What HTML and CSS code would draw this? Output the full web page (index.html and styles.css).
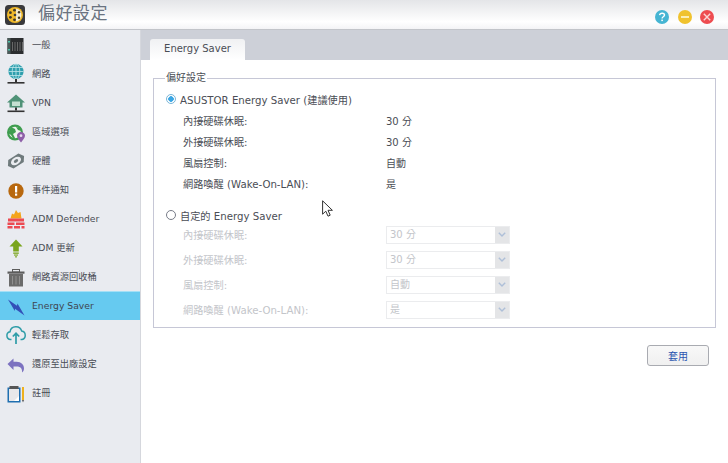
FILE: index.html
```html
<!DOCTYPE html>
<html lang="zh-Hant">
<head>
<meta charset="utf-8">
<title>偏好設定</title>
<link rel="stylesheet" href="styles.css">
</head>
<body>
<div class="window">
  <header class="titlebar">
    <svg class="logo" viewBox="0 0 20 20" width="20" height="20">
      <rect width="20" height="20" rx="3.5" fill="#3a3a3c"/>
      <circle cx="10" cy="10" r="8" fill="#f0b92a"/>
      <path d="M11 3.600a6.500 6.500 0 0 1 0 12.800z" fill="#f4ecd0"/>
      <circle cx="10" cy="10" r="1.300" fill="#3a3a3c"/>
      <g fill="#40382a"><circle cx="9.500" cy="5.200" r="1.400"/><circle cx="9.500" cy="14.800" r="1.400"/><circle cx="5.400" cy="7.700" r="1.400"/><circle cx="14" cy="7.300" r="1.200"/><circle cx="5.400" cy="12.300" r="1.400"/><circle cx="14" cy="12.700" r="1.200"/></g>
    </svg>
    <h1 class="title">偏好設定</h1>
    <div class="winbtns">
      <svg class="winbtn" viewBox="0 0 14 14" width="14" height="14"><circle cx="7" cy="7" r="7" fill="#46b5d3"/><path d="M4.600 5.200C4.800 3.800 5.900 3.200 7.100 3.200c1.400 0 2.400.8 2.400 1.900 0 1.700-2.400 1.600-2.400 3.300" fill="none" stroke="#fff" stroke-width="1.400"/><rect x="6.300" y="9.600" width="1.600" height="1.500" fill="#fff"/></svg>
      <svg class="winbtn" viewBox="0 0 14 14" width="14" height="14"><circle cx="7" cy="7" r="7" fill="#f0c22e"/><rect x="3" y="6" width="8" height="2" fill="#fbeeb5"/></svg>
      <svg class="winbtn" viewBox="0 0 14 14" width="14" height="14"><circle cx="7" cy="7" r="7" fill="#ee4c50"/><path d="M3.800 3.800l6.400 6.400M10.200 3.800l-6.400 6.400" stroke="#fbd5d5" stroke-width="1.400"/></svg>
    </div>
  </header>
  <div class="body">
    <nav class="sidebar">
      <a class="item"><svg class="icon" viewBox="0 0 24 24"><rect x="3.500" y="5" width="16" height="16" fill="#2b2d2f"/><rect x="3.500" y="5" width="3" height="16" fill="#4a5a58"/><g stroke="#777" stroke-width=".8"><path d="M8.500 9v9M11 9v9M13.500 9v9M16 9v9M18.500 9v9"/></g><rect x="4" y="8" width="2" height="1.500" fill="#4cc0a8"/><rect x="4" y="16" width="2" height="1.500" fill="#4cc0a8"/></svg><span>一般</span></a>
      <a class="item"><svg class="icon" viewBox="0 0 24 24"><circle cx="12" cy="9.500" r="7.600" fill="#2f9fae"/><path d="M4.400 9.500h15.200M5.500 5.500h13M5.500 13.500h13M12 2v15" stroke="#bfe6ea" stroke-width=".8" fill="none"/><ellipse cx="12" cy="9.500" rx="3.800" ry="7.600" stroke="#bfe6ea" stroke-width=".8" fill="none"/><rect x="11" y="17" width="2" height="3" fill="#333"/><rect x="3.500" y="20" width="17" height="1.600" fill="#333"/></svg><span>網路</span></a>
      <a class="item"><svg class="icon" viewBox="0 0 24 24"><path d="M12 3.500L3 11.500h2.500v5h13v-5H21z" fill="#4f9277"/><rect x="8" y="10.500" width="8" height="4.500" fill="#c4e0d2"/><rect x="11" y="16.500" width="2" height="3" fill="#333"/><rect x="3.500" y="19.500" width="17" height="1.600" fill="#333"/></svg><span>VPN</span></a>
      <a class="item"><svg class="icon" viewBox="0 0 24 24"><circle cx="11" cy="12.500" r="8" fill="#3f9d4f"/><circle cx="11" cy="12.500" r="5.800" fill="#f0f4ee"/><path d="M7 7l4 2 1 3-3 2 2 4-1 2-3-5-3-2zM12 7l4 1 1 3-3-1z" fill="#3f9d4f"/><path d="M17 12c-2.500 0-4 1.800-4 3.800 0 2.200 2.700 4.800 4 6.700 1.300-1.900 4-4.500 4-6.700 0-2-1.500-3.800-4-3.800z" fill="#8e5fa8"/><circle cx="17" cy="15.700" r="1.400" fill="#e8d8f0"/></svg><span>區域選項</span></a>
      <a class="item"><svg class="icon" viewBox="0 0 24 24"><g transform="rotate(-32 12 12)"><path d="M6 7h12l3.500 5-3.500 5H6l-3.500-5z" fill="#6f7a7c"/><ellipse cx="12" cy="12" rx="5.500" ry="3.600" fill="#e9ebef"/><ellipse cx="12" cy="12" rx="2.400" ry="1.500" fill="#6f7a7c"/></g></svg><span>硬體</span></a>
      <a class="item"><svg class="icon" viewBox="0 0 24 24"><circle cx="12" cy="13" r="7.700" fill="#b8680f"/><rect x="11" y="8" width="2.200" height="6.500" fill="#fff"/><rect x="11" y="15.500" width="2.200" height="2.200" fill="#fff"/></svg><span>事件通知</span></a>
      <a class="item"><svg class="icon" viewBox="0 0 24 24"><path d="M12 3l2 3 2.500-1 1 6.500H6.500l1.500-5 2 1z" fill="#f4a41c"/><path d="M4 11.500h16v3H4zM3.500 15.500h7v2.500h-7zM12 15.500h8.500V18H12zM3.500 19h5v2.500h-5zM10 19h6v2.500h-6zM17.500 19h3v2.500h-3z" fill="#ec4a52"/></svg><span>ADM Defender</span></a>
      <a class="item"><svg class="icon" viewBox="0 0 24 24"><path d="M12 3.500l6.500 7h-3.700v5H9.200v-5H5.500z" fill="#7aa51c"/><rect x="9.200" y="16.500" width="5.600" height="1.300" fill="#7aa51c"/><rect x="10" y="18.500" width="4" height="1.100" fill="#7aa51c"/><rect x="11" y="20.300" width="2" height="1.100" fill="#7aa51c"/></svg><span>ADM 更新</span></a>
      <a class="item"><svg class="icon" viewBox="0 0 24 24"><rect x="3.500" y="6.500" width="17" height="2.200" fill="#5c5c5c"/><rect x="8.500" y="4.500" width="7" height="2.500" fill="none" stroke="#5c5c5c" stroke-width="1"/><path d="M5 9h14v12.500H5z" fill="#6b6b6b"/><path d="M8.500 11v8.500M12 11v8.500M15.500 11v8.500" stroke="#909090" stroke-width="1"/></svg><span>網路資源回收桶</span></a>
      <a class="item active"><svg class="icon" viewBox="0 0 24 24"><path d="M4 5.500l9 6.200.5-2.200 7 12-9.500-6.700-.2 2.200z" fill="#3350b8"/></svg><span>Energy Saver</span></a>
      <a class="item"><svg class="icon" viewBox="0 0 24 24"><path d="M7.500 16.500H6.500a3.900 3.900 0 0 1-.5-7.700 6 6 0 0 1 11.700-.7 4.300 4.300 0 0 1 .3 8.400h-1.500" fill="none" stroke="#2f9da8" stroke-width="1.500"/><path d="M12 21v-10M8.800 13.500l3.200-3.200 3.200 3.200" fill="none" stroke="#2f9da8" stroke-width="1.700"/></svg><span>輕鬆存取</span></a>
      <a class="item"><svg class="icon" viewBox="0 0 24 24"><path d="M3.500 12L9.500 6.500v3.300h3c4.800 0 7.500 3 7.500 6.700 0 2-.8 3.200-2 4 .5-4-1.800-6-5-6H9.500v3.500z" fill="#7c72c0"/></svg><span>還原至出廠設定</span></a>
      <a class="item"><svg class="icon" viewBox="0 0 24 24"><rect x="3.500" y="6.500" width="13" height="15" fill="#1f6fb0"/><rect x="5" y="8" width="10" height="12" fill="#e8e8ea"/><path d="M15 20v-5l-5 5z" fill="#fff"/><rect x="5.500" y="5" width="9" height="3" fill="#555"/><rect x="18" y="6" width="2" height="13" fill="#eeb11e"/><path d="M18 19h2l-1 2.500z" fill="#555"/></svg><span>註冊</span></a>
    </nav>
    <main class="main">
      <div class="tabs"><div class="tab">Energy Saver</div></div>
      <div class="content">
        <fieldset class="group">
          <legend>偏好設定</legend>
          <label class="radio-row"><span class="radio on"></span>ASUSTOR Energy Saver (建議使用)</label>
          <div class="rows">
            <div class="row"><span class="key">內接硬碟休眠:</span><span>30 分</span></div>
            <div class="row"><span class="key">外接硬碟休眠:</span><span>30 分</span></div>
            <div class="row"><span class="key">風扇控制:</span><span>自動</span></div>
            <div class="row"><span class="key">網路喚醒 (Wake-On-LAN):</span><span>是</span></div>
          </div>
          <label class="radio-row custom"><span class="radio"></span>自定的 Energy Saver</label>
          <div class="rows disabled">
            <div class="row"><span class="key">內接硬碟休眠:</span><span class="select"><span class="val">30 分</span><span class="arrow"><svg viewBox="0 0 8 5" width="8" height="5"><path d="M.8.8L4 4l3.200-3.200" fill="none" stroke="#aebfd8" stroke-width="1.400"/></svg></span></span></div>
            <div class="row"><span class="key">外接硬碟休眠:</span><span class="select"><span class="val">30 分</span><span class="arrow"><svg viewBox="0 0 8 5" width="8" height="5"><path d="M.8.8L4 4l3.200-3.200" fill="none" stroke="#aebfd8" stroke-width="1.400"/></svg></span></span></div>
            <div class="row"><span class="key">風扇控制:</span><span class="select"><span class="val">自動</span><span class="arrow"><svg viewBox="0 0 8 5" width="8" height="5"><path d="M.8.8L4 4l3.200-3.200" fill="none" stroke="#aebfd8" stroke-width="1.400"/></svg></span></span></div>
            <div class="row"><span class="key">網路喚醒 (Wake-On-LAN):</span><span class="select"><span class="val">是</span><span class="arrow"><svg viewBox="0 0 8 5" width="8" height="5"><path d="M.8.8L4 4l3.200-3.200" fill="none" stroke="#aebfd8" stroke-width="1.400"/></svg></span></span></div>
          </div>
        </fieldset>
        <div class="actions"><button class="apply" type="button">套用</button></div>
      </div>
    </main>
  </div>
  <svg class="cursor" viewBox="0 0 12 18" width="12" height="18"><path d="M.6.8v13.400l3.200-3 2.200 5 2.200-1-2.200-4.900h4.400z" fill="#fff" stroke="#333" stroke-width="1"/></svg>
</div>
</body>
</html>
```
FILE: styles.css
```css
* { box-sizing: border-box; }
html, body { margin: 0; padding: 0; }
body {
  width: 728px;
  height: 463px;
  overflow: hidden;
  font-family: "DejaVu Sans", "Noto Sans CJK TC", sans-serif;
  font-size: 10px;
  color: #4a4d55;
  background: #fff;
}
.window { position: relative; width: 728px; height: 463px; display: flex; flex-direction: column; }
.titlebar {
  height: 30px;
  flex: none;
  display: flex;
  align-items: center;
  padding: 0 5px;
  background: linear-gradient(#e4e5e8, #ffffff 75%, #f4f4f6);
  border-bottom: 1px solid #c2c4c9;
}
.logo { flex: none; margin-top: 1px; }
.title {
  margin: -5px 0 0 13px;
  font-size: 17px;
  line-height: 20px;
  font-weight: 400;
  letter-spacing: .5px;
  color: #6a7380;
  font-family: "Noto Sans CJK TC", sans-serif;
}
.winbtns { margin: 5px 9px 0 auto; display: flex; gap: 8.500px; }
.winbtn { display: block; }
.body { flex: 1; display: flex; min-height: 0; }
.sidebar {
  width: 141px;
  flex: none;
  background: #e9ebf0;
  border-right: 1px solid #d5d7dd;
  display: flex;
  flex-direction: column;
  font-size: 9.250px;
}
.item {
  height: 29px;
  flex: none;
  display: flex;
  align-items: center;
  gap: 4.500px;
  padding-left: 3.500px;
  color: #4a4d55;
}
.item span { margin-top: -1px; }
.item.active { background: #66caf0; box-shadow: inset 0 1px 0 #a5e0f6; color: #3f4650; }
.icon { width: 24px; height: 24px; flex: none; }
.main { flex: 1; min-width: 0; display: flex; flex-direction: column; }
.tabs {
  height: 30px;
  flex: none;
  background: #cdd0d8;
  padding: 9px 0 0 9px;
  display: flex;
}
.tab {
  width: 95px;
  height: 21px;
  background: linear-gradient(#f0f1f3, #fff);
  border-radius: 3px 3px 0 0;
  text-align: center;
  line-height: 20px;
  color: #4a4d55;
}
.content { flex: 1; padding: 12px 12px 0 12px; }
.group {
  margin: 0;
  padding: 7px 12px 0 12px;
  height: 256px;
  border: 1px solid #c6c7d6;
  min-width: 0;
}
.group legend { padding: 0 1px; margin-left: -1px; font-size: 10px; color: #4a4d55; line-height: 12px; }
.radio-row { display: flex; align-items: center; gap: 4px; height: 16px; font-size: 10.200px; }
.radio {
  width: 10px; height: 10px; border-radius: 50%;
  border: 1px solid #777c88; background: #fff; flex: none;
}
.radio.on { border-color: #7ab6d8; background: radial-gradient(circle, #3aa6e4 0 2.500px, #fff 3px); }
.rows { padding: 0 0 0 17px; margin-top: 3px; display: flex; flex-direction: column; font-size: 10.200px; }
.row { display: flex; align-items: center; height: 21px; }
.row > span:last-child { font-size: 10px; }
.key { width: 203px; flex: none; }
.custom { margin-top: 13px; }
.disabled { color: #c3c5ca; margin-top: -1px; }
.disabled .row { height: 25px; }
.select {
  width: 124px; height: 18px;
  display: flex;
  border: 1px solid #ebecee;
  background: #fff;
}
.val { flex: 1; padding-left: 3px; line-height: 16px; color: #c3c5ca; }
.arrow {
  width: 14px; background: #e4e5e7;
  display: flex; align-items: center; justify-content: center;
}
.actions { display: flex; justify-content: flex-end; padding: 17px 7px 0 0; }
.apply {
  width: 62px; height: 21px; padding: 0;
  font: inherit; font-size: 10px;
  color: #2a55b0;
  background: linear-gradient(#f8f8f8, #f0f0f0);
  border: 1px solid #a9abb1;
  border-radius: 3px;
}
.cursor { position: absolute; left: 322px; top: 200px; }
```
